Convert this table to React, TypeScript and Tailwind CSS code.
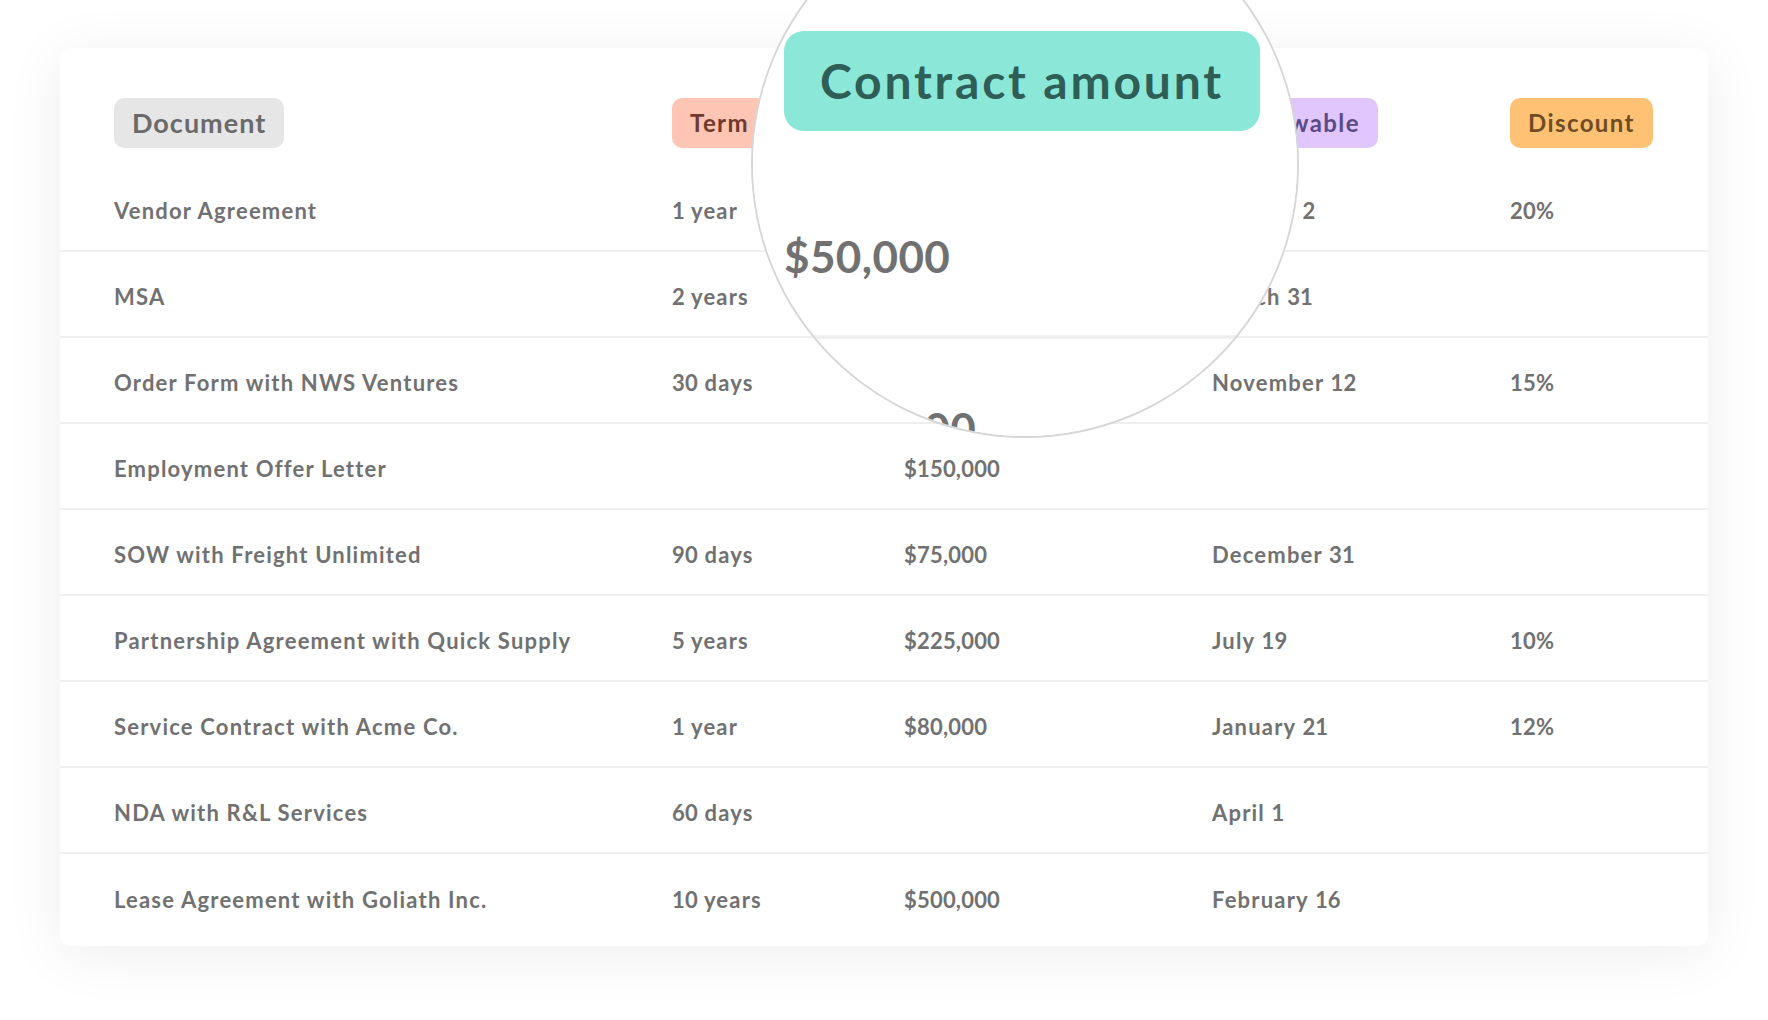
const headers = [
  { label: "Document", className: "bg-[#e6e6e6] text-[#6a6a6a] text-[27px] tracking-[1px]" },
  { label: "Term", className: "bg-[#fec4b4] text-[#6e3a2e] text-[24px] tracking-[1.4px]" },
  { label: "Contract amount", className: "bg-[#8be8d9] text-[#2f5e56] text-[24px] tracking-[1.4px]" },
  { label: "Renewable", className: "bg-[#e1c6fd] text-[#5a4a85] text-[24px] tracking-[1.4px]" },
  { label: "Discount", className: "bg-[#ffc274] text-[#6f4d24] text-[24px] tracking-[1.4px]" },
];

const rows = [
  ["Vendor Agreement", "1 year", "$50,000", "January 2", "20%"],
  ["MSA", "2 years", "$100,000", "March 31", ""],
  ["Order Form with NWS Ventures", "30 days", "$25,000", "November 12", "15%"],
  ["Employment Offer Letter", "", "$150,000", "", ""],
  ["SOW with Freight Unlimited", "90 days", "$75,000", "December 31", ""],
  ["Partnership Agreement with Quick Supply", "5 years", "$225,000", "July 19", "10%"],
  ["Service Contract with Acme Co.", "1 year", "$80,000", "January 21", "12%"],
  ["NDA with R&L Services", "60 days", "", "April 1", ""],
  ["Lease Agreement with Goliath Inc.", "10 years", "$500,000", "February 16", ""],
];

const cols = "grid grid-cols-[558px_232px_308px_298px_1fr] items-center";

// digits in the reference font are narrow, so they get less letter spacing
function Cell({ text }: { text: string }) {
  const parts = text.split(/([$\d][\d,]*)/);
  return (
    <span className="whitespace-nowrap text-[22px] font-bold tracking-[1.2px] text-[#717171]">
      {parts.map((p, i) =>
        /^[$\d]/.test(p) ? (
          <span key={i} className="tracking-[0.2px]">
            {p}
          </span>
        ) : (
          p
        )
      )}
    </span>
  );
}

function Table() {
  return (
    <div className="pt-[48px] font-[Lato,sans-serif]">
      <div className="mx-[60px] rounded-[10px] bg-white pb-[6px] shadow-[0_8px_60px_rgba(0,0,0,0.07)]">
        {/* Header badges */}
        <div className={`${cols} h-[118px] items-start px-[54px] pt-[50px]`}>
          {headers.map((h) => (
            <div key={h.label} className="flex">
              <span
                className={`flex h-[50px] items-center rounded-[10px] px-[18px] font-bold whitespace-nowrap ${h.className}`}
              >
                {h.label}
              </span>
            </div>
          ))}
        </div>

        {/* Rows */}
        {rows.map((row, i) => (
          <div
            key={row[0]}
            className={`${cols} h-[86px] px-[54px] pt-[4px] ${i < rows.length - 1 ? "border-b-2 border-[#efefef]" : ""}`}
          >
            {row.map((cell, j) => (
              <Cell key={j} text={cell} />
            ))}
          </div>
        ))}
      </div>
    </div>
  );
}

export default function App() {
  return (
    <div className="relative h-[1020px] w-[1768px] overflow-hidden bg-white">
      <Table />

      {/* Magnifier */}
      <div className="absolute left-[753px] top-[-108px] h-[544px] w-[544px] overflow-hidden rounded-full bg-white ring-2 ring-[#d6d6d6]">
        <div className="absolute left-[-753px] top-[108px] w-[1768px] origin-[1024px_165px] scale-200">
          <Table />
        </div>
      </div>
    </div>
  );
}
